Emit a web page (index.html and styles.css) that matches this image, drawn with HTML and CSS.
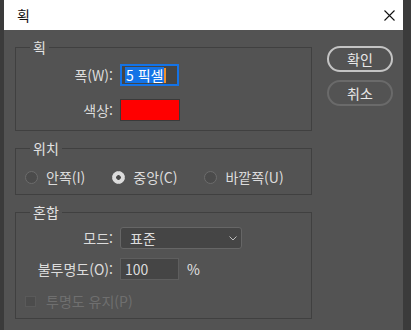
FILE: index.html
```html
<!DOCTYPE html>
<html lang="ko">
<head>
    <meta charset="UTF-8">
    <title>획</title>
    <link rel="stylesheet" href="styles.css">
</head>
<body>
    <div class="window">
        <div class="titlebar">
            <span class="title">획</span>
            <svg class="close" width="11" height="11" viewBox="0 0 11 11">
                <path d="M0.5 0.5 L10.5 10.5 M10.5 0.5 L0.5 10.5" stroke="#111" stroke-width="1.1" fill="none"/>
            </svg>
        </div>
        <div class="content">
            <div class="groups">
                <fieldset class="group stroke">
                    <legend>획</legend>
                    <div class="rows">
                        <label class="lbl">폭(W):</label>
                        <div class="field focused"><span class="sel">5 픽셀</span><span class="caret"></span></div>
                        <label class="lbl">색상:</label>
                        <div class="swatch"></div>
                    </div>
                </fieldset>
                <fieldset class="group location">
                    <legend>위치</legend>
                    <div class="radios">
                        <div class="radio"><span class="dot"></span>안쪽(I)</div>
                        <div class="radio on"><span class="dot"></span>중앙(C)</div>
                        <div class="radio"><span class="dot"></span>바깥쪽(U)</div>
                    </div>
                </fieldset>
                <fieldset class="group blend">
                    <legend>혼합</legend>
                    <div class="rows">
                        <label class="lbl">모드:</label>
                        <div class="select">
                            <span>표준</span>
                            <svg width="8" height="5" viewBox="0 0 8 5"><path d="M0.5 0.5 L4 4 L7.5 0.5" stroke="#bdbdbd" stroke-width="1" fill="none"/></svg>
                        </div>
                        <label class="lbl">불투명도(O):</label>
                        <div class="opacity">
                            <div class="field">100</div>
                            <span class="unit">%</span>
                        </div>
                    </div>
                    <div class="check"><span class="box"></span>투명도 유지(P)</div>
                </fieldset>
            </div>
            <div class="buttons">
                <button class="btn primary">확인</button>
                <button class="btn">취소</button>
            </div>
        </div>
    </div>
</body>
</html>
```

FILE: styles.css
```css
:root { --panel: #535353; --line: #404040; --text: #dcdcdc; --field: #454545; }
body { margin: 0; background: #3b3b3b; font-family: "Noto Sans CJK KR", "Noto Sans", sans-serif; font-size: 14px; color: var(--text); }
.window { width: 399px; height: 330px; margin-left: 4px; background: var(--panel); }
.titlebar { height: 30px; background: #fff; display: flex; align-items: center; justify-content: space-between; padding: 0 8px 0 13px; }
.title { color: #111; font-size: 14px; line-height: 16px; }
.content { display: flex; padding: 9px 0 0 11px; }
.groups { width: 297px; display: flex; flex-direction: column; gap: 9px; }
.group { margin: 0; padding: 0 0 9px 0; border: 1px solid var(--line); min-width: 0; }
.group legend { margin-left: 14px; padding: 0 3px; line-height: 16px; color: #e2e2e2; }
.rows { display: grid; grid-template-columns: 97px auto; column-gap: 7px; row-gap: 13px; align-items: center; justify-items: start; padding-top: 9px; }
.lbl { justify-self: end; line-height: 16px; }
.field { box-sizing: border-box; width: 59px; height: 22px; background: var(--field); border: 1px solid #5e5e5e; padding: 0 4px; display: flex; align-items: center; line-height: 16px; }
.field.focused { border: 2px solid #1473e6; padding: 0 3px; }
.sel { background: #1473e6; color: #fff; padding: 0 1px; }
.caret { width: 2px; height: 15px; background: #f0902c; }
.swatch { box-sizing: border-box; width: 60px; height: 22px; background: #ff0000; border: 1px solid #3a3a3a; }
.location .radios { display: flex; gap: 27px; padding: 13px 0 0 9px; line-height: 16px; }
.radio { display: flex; align-items: center; gap: 8px; }
.dot { box-sizing: border-box; width: 13px; height: 13px; border-radius: 50%; border: 1px solid #6c6c6c; background: #4b4b4b; }
.radio.on .dot { border-color: #dcdcdc; background: radial-gradient(circle, #4a4a4a 0 2px, #dcdcdc 2.6px); }
.blend .rows { padding-top: 7px; row-gap: 9px; }
.select { box-sizing: border-box; width: 122px; height: 22px; background: #454545; border: 1px solid #666; border-radius: 3px; display: flex; align-items: center; justify-content: space-between; padding: 0 4px 0 9px; }
.opacity { display: flex; align-items: center; gap: 8px; }
.unit { color: #e2e2e2; }
.check { display: flex; align-items: center; gap: 10px; padding: 13px 0 0 9px; line-height: 16px; color: #6f6f6f; }
.box { box-sizing: border-box; width: 11px; height: 11px; border: 1px solid #5a5a5a; background: #4c4c4c; }
.buttons { display: flex; flex-direction: column; gap: 8px; margin: 7px 0 0 15px; }
.btn { box-sizing: border-box; width: 66px; height: 26px; border-radius: 13px; background: transparent; border: 2px solid #6a6a6a; color: #e8e8e8; font: inherit; line-height: 16px; padding: 0; }
.btn.primary { border-color: #c4c4c4; }
```
